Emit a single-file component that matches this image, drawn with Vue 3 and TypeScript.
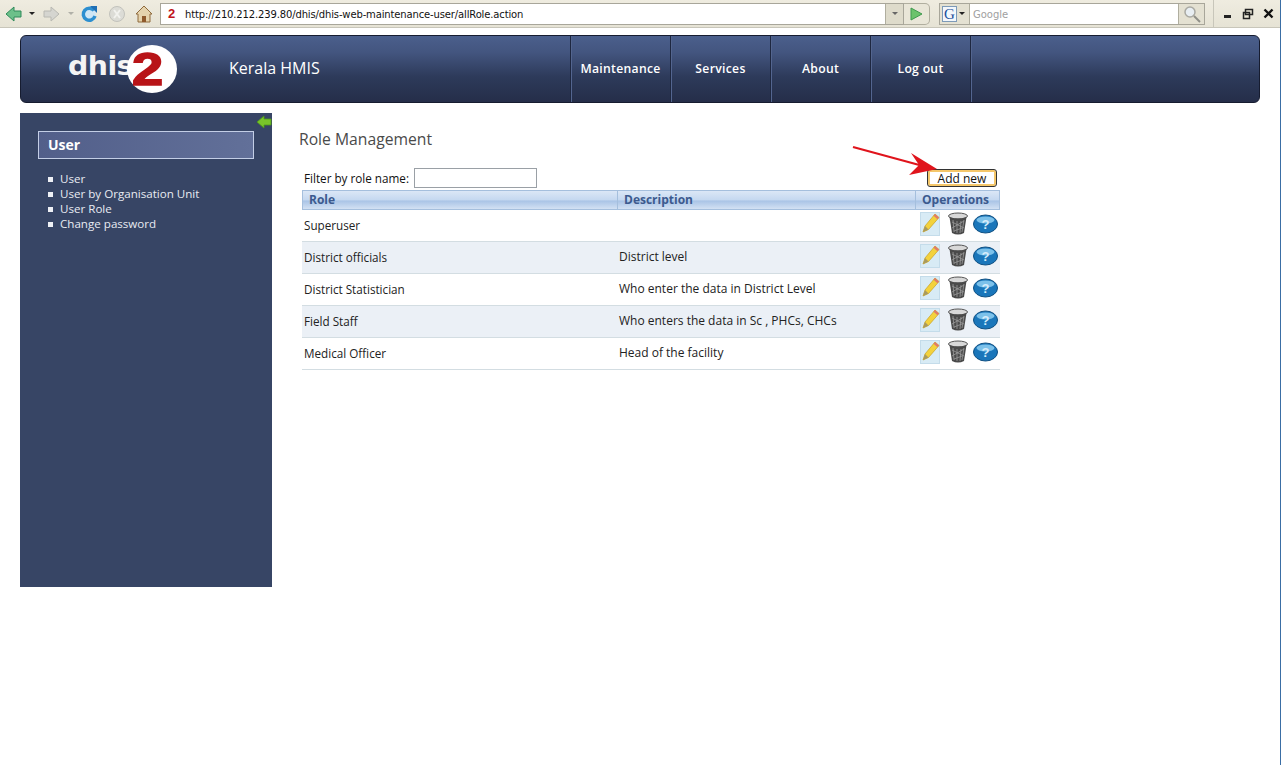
<script setup lang="ts">
interface Role { name: string; description: string }
const roles: Role[] = [
  { name: 'Superuser', description: '' },
  { name: 'District officials', description: 'District level' },
  { name: 'District Statistician', description: 'Who enter the data in District Level' },
  { name: 'Field Staff', description: 'Who enters the data in Sc , PHCs, CHCs' },
  { name: 'Medical Officer', description: 'Head of the facility' },
]
const menu: string[] = ['Maintenance', 'Services', 'About', 'Log out']
const side: string[] = ['User', 'User by Organisation Unit', 'User Role', 'Change password']
</script>

<template>
  <div class="page">
    <div class="browser">
      <svg class="tb-icon back" width="18" height="18" viewBox="0 0 18 18"><path d="M1 9 9 2v4h7v6H9v4z" fill="#6cc08a" stroke="#2f8a5a"/></svg>
      <span class="caret dark"></span>
      <svg class="tb-icon fwd" width="18" height="18" viewBox="0 0 18 18"><path d="M17 9 9 2v4H2v6h7v4z" fill="#d5d5d0" stroke="#b8b8b2"/></svg>
      <span class="caret"></span>
      <svg class="tb-icon reload" width="18" height="18" viewBox="0 0 18 18"><circle cx="9" cy="9" r="7" fill="#cfe6f5"/><path d="M14 5.500A6 6 0 1 0 15 11" fill="none" stroke="#2d8fd0" stroke-width="3.500"/><path d="M10 1h7v7z" fill="#1f6fb5"/></svg>
      <svg class="tb-icon stop" width="18" height="18" viewBox="0 0 18 18"><circle cx="9" cy="9" r="7.500" fill="#dcdcd6" stroke="#c2c2bc"/><path d="m6 5 6 8M12 5l-6 8" stroke="#f2f2ee" stroke-width="2"/></svg>
      <svg class="tb-icon home" width="18" height="18" viewBox="0 0 18 18"><path d="M9 1 1 9h2v8h12V9h2z" fill="#e5d3ad" stroke="#8f6a3c"/><path d="M7 11h4v6H7z" fill="#8f5a2c"/></svg>
      <div class="urlbar">
        <span class="favicon">2</span>
        <span class="url">http://210.212.239.80/dhis/dhis-web-maintenance-user/allRole.action</span>
        <span class="url-drop"><span class="caret mid"></span></span>
      </div>
      <span class="go"><svg width="13" height="14" viewBox="0 0 13 14"><path d="M1 1 12 7 1 13z" fill="#6cc36c" stroke="#3e9a4e"/></svg></span>
      <div class="searchbar">
        <span class="engine"><span class="g">G</span><span class="caret dark"></span></span>
        <span class="search-text">Google</span>
        <span class="search-btn"><svg width="18" height="18" viewBox="0 0 18 18"><circle cx="7" cy="7" r="5" fill="#e8eef2" stroke="#a9a9a2" stroke-width="1.500"/><path d="m11 11 6 6" stroke="#8f8f88" stroke-width="2"/></svg></span>
      </div>
      <div class="win-btns">
        <span class="w-min"></span>
        <svg width="12" height="12" viewBox="0 0 12 12"><path d="M3.500 1.500h7v5h-7zM1.500 4.500h6v6h-6z" fill="#ece9d8" stroke="#222" stroke-width="1.500"/></svg>
        <svg width="11" height="11" viewBox="0 0 11 11"><path d="m1.500 1.500 8 8M9.500 1.500l-8 8" stroke="#111" stroke-width="2.400"/></svg>
      </div>
    </div>

    <header class="banner">
      <div class="logo">
        <span class="logo-text">dhis</span>
        <span class="logo-disc"><span class="logo-two">2</span></span>
      </div>
      <div class="site">Kerala HMIS</div>
      <nav class="menu">
        <a v-for="m in menu" :key="m" class="menu-item">{{ m }}</a>
      </nav>
    </header>

    <div class="main">
      <aside class="sidebar">
        <svg class="collapse" width="16" height="14" viewBox="0 0 16 14"><path d="M1 7 8 1v3h7v6H8v3z" fill="#79c52a" stroke="#4f9a18" stroke-width=".8"/></svg>
        <div class="side-title">User</div>
        <ul class="side-list">
          <li v-for="s in side" :key="s">{{ s }}</li>
        </ul>
      </aside>

      <section class="content">
        <h1 class="title">Role Management</h1>
        <div class="filter-row">
          <label class="filter">Filter by role name:<input class="filter-input" type="text" /></label>
          <div class="add-wrap">
            <svg class="arrow" width="90" height="32" viewBox="0 0 90 32"><path d="M2 2 72 21" stroke="#e0141c" stroke-width="2.200"/><path d="M86 24 58 30 68 20 60 8z" fill="#e0141c"/></svg>
            <button class="add" type="button">Add new</button>
          </div>
        </div>
        <div class="table">
          <div class="thead">
            <div class="th c-role">Role</div>
            <div class="th c-desc">Description</div>
            <div class="th c-ops">Operations</div>
          </div>
          <div v-for="r in roles" :key="r.name" class="row">
            <div class="c-role td">{{ r.name }}</div>
            <div class="c-desc td">{{ r.description }}</div>
            <div class="c-ops ops">
              <svg width="20" height="24" viewBox="0 0 20 24"><rect x=".5" y=".5" width="19" height="23" fill="#d8ebf5" stroke="#c4dcea"/><path d="m3 20 2-6 10-12 4 3.500-10.500 12z" fill="#f3d23c" stroke="#c9a020" stroke-width=".7"/><path d="m3 20 2-6 3.500 3.500z" fill="#a89a60"/><path d="m15 2 4 3.500-1.500 1.700-4-3.500z" fill="#e07a6a"/></svg>
              <svg width="20" height="24" viewBox="0 0 20 24"><ellipse cx="10" cy="4" rx="9.500" ry="3" fill="#d8d8d8" stroke="#555"/><path d="M1.500 5 4 21q6 3 12 0l2.500-16q-8.500 3-17 0z" fill="#4a4a4a"/><path d="M5 8l1 12M9 9v12M13 9l-1 12M16 8l-2 12M4 10l12 6M4 16l12-7M6 19l8-3" stroke="#9c9c9c" stroke-width=".8"/></svg>
              <svg width="25" height="20" viewBox="0 0 25 20"><ellipse cx="12.500" cy="10" rx="12" ry="9" fill="#1a76ba" stroke="#0e4f82"/><ellipse cx="12.500" cy="6" rx="9" ry="3.500" fill="#7cc1ea"/><text x="12.500" y="15" class="q">?</text></svg>
            </div>
          </div>
        </div>
      </section>
    </div>
  </div>
</template>

<style scoped>
.page { width: 1281px; height: 765px; background: #fff; overflow: hidden; font-family: "DejaVu Sans", sans-serif; position: relative; }
.browser { height: 28px; box-sizing: border-box; background: linear-gradient(#efece0, #e6e3d5); border-bottom: 1px solid #c8c6ba; display: flex; align-items: center; padding-left: 5px; position: relative; }
.browser::after { content: ""; position: absolute; left: 1280px; top: 0; width: 1px; height: 765px; background: #3a6ea5; }
.tb-icon { flex: none; }
.caret { width: 0; height: 0; border: 3px solid transparent; border-top: 3px solid #b0b0a8; border-bottom: 0; flex: none; }
.caret.dark { border-top-color: #222; }
.caret.mid { border-top-color: #666; }
.back + .caret { margin: 0 0 0 6px; }
.fwd { margin-left: 7px; }
.fwd + .caret { margin-left: 8px; }
.reload { margin-left: 6px; }
.stop { margin-left: 10px; }
.home { margin-left: 9px; }
.urlbar { margin-left: 7px; width: 744px; height: 22px; box-sizing: border-box; background: #fff; border: 1px solid #a8a69a; display: flex; align-items: center; }
.favicon { width: 21px; text-align: center; color: #c0141c; font: bold 13px "Liberation Sans", sans-serif; }
.url { margin: 2px 0 0 3px; font: 10px "DejaVu Sans", sans-serif; color: #111; flex: 1; white-space: nowrap; letter-spacing: -.14px; }
.url-drop { width: 17px; height: 20px; background: #dedbcb; border-left: 1px solid #b0ae9f; display: flex; align-items: center; justify-content: center; }
.go { width: 26px; height: 22px; box-sizing: border-box; border: 1px solid #b0ae9f; border-left: 0; border-radius: 0 5px 5px 0; background: #e9e6d8; display: flex; align-items: center; justify-content: center; }
.searchbar { margin-left: 9px; width: 266px; height: 22px; box-sizing: border-box; background: #fff; border: 1px solid #a8a69a; display: flex; align-items: center; }
.engine { width: 30px; height: 20px; background: #e4e1d2; border-right: 1px solid #b0ae9f; display: flex; align-items: center; gap: 2px; box-sizing: border-box; padding-left: 2px; flex: none; }
.g { width: 15px; height: 16px; box-sizing: border-box; border: 1px solid #7d9ab8; background: #f3f7fb; color: #1b4f9c; font: 15px/14px "Liberation Serif", serif; text-align: center; }
.search-text { flex: 1; margin: 2px 0 0 3px; font: 10px "DejaVu Sans", sans-serif; color: #a0a0a0; }
.search-btn { width: 25px; height: 20px; background: #e4e1d2; border-left: 1px solid #b0ae9f; display: flex; align-items: center; justify-content: center; }
.win-btns { margin-left: 8px; height: 28px; flex: 1; border-left: 1px solid #c8c6ba; padding-left: 10px; display: flex; align-items: center; gap: 9px; box-sizing: border-box; }
.w-min { width: 7px; height: 3px; background: #222; margin-top: 6px; margin-right: 2px; }

.banner { margin: 7px 21px 0 20px; height: 68px; box-sizing: border-box; border: 1px solid #161c30; border-radius: 6px; background: linear-gradient(#4b5f8c 0%, #43557f 25%, #2d3a5a 62%, #252e49 100%); display: flex; align-items: center; }
.logo { width: 136px; margin-left: 47px; display: flex; align-items: center; flex: none; position: relative; height: 48px; }
.logo-text { color: #f4f4f4; font: bold 27px/48px "DejaVu Sans", sans-serif; letter-spacing: -.5px; transform-origin: left center; transform: scaleX(1.05) translateY(-3px); }
.logo-disc { position: absolute; left: 59px; top: 0; width: 50px; height: 48px; border-radius: 50%; background: #fff; display: flex; align-items: center; justify-content: flex-start; padding-left: 5px; box-sizing: border-box; }
.logo-two { color: #b81418; font: bold 46px/46px "Liberation Sans", sans-serif; -webkit-text-stroke: 1.500px #b81418; transform-origin: left center; transform: scaleX(1.22); }
.site { width: 341px; margin-left: 25px; color: #fff; font: 16px "Open Sans", sans-serif; flex: none; position: relative; top: -1px; }
.menu { display: flex; height: 100%; border-left: 1px solid #1e2740; box-shadow: inset 1px 0 0 #53658f; }
.menu-item { width: 100px; box-sizing: border-box; border-right: 1px solid #1e2740; display: flex; align-items: center; justify-content: center; color: #fff; font: 600 12.200px "Open Sans", sans-serif; letter-spacing: .3px; box-shadow: 1px 0 0 #53658f; padding: 0 0 2px; }

.main { display: flex; margin: 10px 0 0 20px; }
.sidebar { width: 252px; height: 474px; background: #374565; position: relative; box-sizing: border-box; padding: 18px 18px 0; flex: none; }
.collapse { position: absolute; right: 0; top: 2px; }
.side-title { height: 28px; box-sizing: border-box; border: 1px solid #c3cee6; background: linear-gradient(90deg, #525f8a, #627099); color: #fff; font: bold 14px/26px "Open Sans", sans-serif; padding-left: 9px; }
.side-list { list-style: none; margin: 12px 0 0; padding: 0; }
.side-list li { height: 15px; color: #e8ebf2; font: 11.600px/15px "Open Sans", sans-serif; padding-left: 22px; position: relative; white-space: nowrap; }
.side-list li::before { content: ""; position: absolute; left: 10px; top: 6px; width: 5px; height: 5px; background: #eef0f5; }

.content { margin-left: 27px; width: 701px; }
.title { margin: 16px 0 0; font: 400 15.700px/20px "Open Sans", sans-serif; color: #4a4a4a; }
.filter-row { display: flex; justify-content: space-between; align-items: flex-start; margin: 19px 3px 0 5px; height: 22px; }
.filter { font: 11.700px/20px "Open Sans", sans-serif; color: #111; display: flex; align-items: center; gap: 5px; }
.filter-input { width: 123px; height: 20px; box-sizing: border-box; border: 1px solid #9aa0a6; background: #fff; padding: 0; }
.add-wrap { position: relative; margin-top: 1px; }
.arrow { position: absolute; right: 56px; top: -24px; }
.add { display: block; width: 70px; height: 18px; box-sizing: border-box; border: 1px solid #333; border-radius: 3px; background: #fff; box-shadow: inset 0 0 0 2px #f5c76a; padding: 0; font: 12px/15px "Open Sans", sans-serif; color: #111; }
.table { margin-left: 3px; width: 698px; }
.thead { height: 20px; display: flex; box-sizing: border-box; border: 1px solid #a5bfdd; background: linear-gradient(#dbe7f6 0%, #c5d8f0 50%, #a9c4e6 55%, #d3e1f3 100%); }
.th { font: bold 12px/18px "Open Sans", sans-serif; color: #3c5a8e; padding-left: 6px; box-sizing: border-box; border-right: 1px solid #a5bfdd; }
.thead .c-role { width: 315px; }
.thead .c-desc { width: 298px; }
.thead .c-ops { flex: 1; border-right: 0; }
.row { display: flex; height: 32px; border-bottom: 1px solid #d3dde2; box-sizing: border-box; align-items: center; }
.row:nth-child(odd) { background: #ebf0f6; }
.td { font: 12px/16px "Open Sans", sans-serif; color: #222; box-sizing: border-box; white-space: nowrap; padding-bottom: 1px; }
.row .c-role { width: 316px; padding-left: 2px; font-size: 11.700px; }
.row .c-desc { width: 297px; padding-left: 1px; }
.row .c-ops { flex: 1; }
.ops { display: flex; align-items: center; gap: 8px; padding: 0 0 3px 5px; box-sizing: border-box; }
.ops svg:last-child { margin-left: -3px; }
.q { font: bold 13px "Liberation Sans", sans-serif; fill: #d6ecfa; text-anchor: middle; }
</style>
